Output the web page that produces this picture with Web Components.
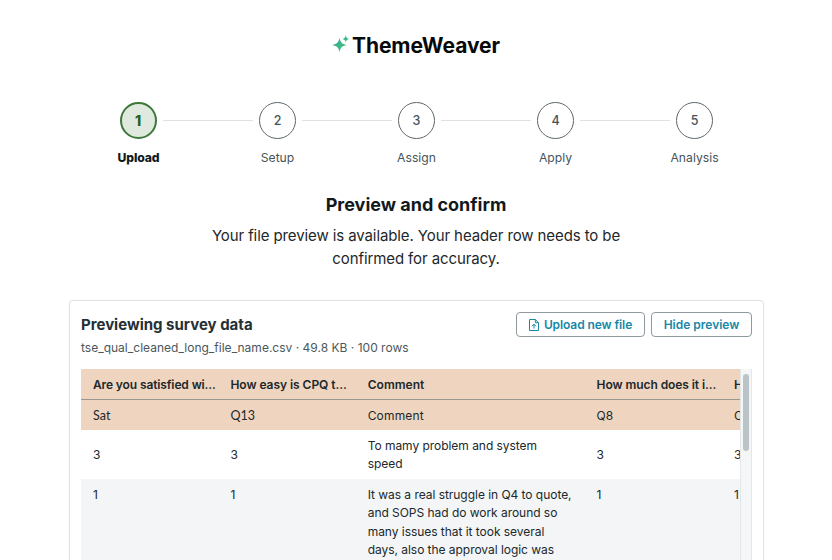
<!DOCTYPE html>
<html lang="en">
<head>
<meta charset="utf-8">
<title>ThemeWeaver</title>
<style>
html, body { margin: 0; background: #fff; }
body { height: 560px; overflow: hidden; font-family: Inter, "Liberation Sans", sans-serif; font-size: 12px; color: #20282b; }
</style>
</head>
<body>
<tw-app></tw-app>
<script>
function define(name, html, setup) {
  const template = document.createElement('template');
  template.innerHTML = html;
  customElements.define(name, class extends HTMLElement {
    connectedCallback() {
      if (this.shadowRoot) return;
      const root = this.attachShadow({ mode: 'open' });
      root.append(template.content.cloneNode(true));
      if (setup) setup(this, root);
    }
  });
}

define('tw-logo', `
<style>
:host { display: flex; justify-content: center; gap: 2px; height: 30px; align-items: center; }
svg { width: 18px; height: 19px; margin-top: -3px; }
span { font-size: 21px; font-weight: 650; letter-spacing: -.06px; color: #07090a; line-height: 30px; }
</style>
<svg viewBox="0 0 17 18">
  <defs><linearGradient id="g" x1="0" y1="0" x2="1" y2="1"><stop offset="0" stop-color="#2f8fa5"/><stop offset=".45" stop-color="#3cb58c"/><stop offset="1" stop-color="#48c973"/></linearGradient></defs>
  <path fill="url(#g)" d="M7.1 2.6C8 7.2 9.3 8.2 13.8 9.4 9.3 10.6 8 11.8 7.1 16.4 6.2 11.8 4.9 10.6 .4 9.4 4.9 8.2 6.2 7.2 7.1 2.6Z"/>
  <path fill="url(#g)" d="M13 .2C13.5 2.5 14.1 3.1 16.3 3.7 13.9 4.3 13.5 4.9 13 7 12.5 4.9 12.1 4.3 9.8 3.7 12.1 3.1 12.5 2.5 13 .2Z"/>
</svg>
<span>ThemeWeaver</span>`);

define('tw-step', `
<style>
:host { display: flex; flex-direction: column; align-items: center; width: 37px; color: #47545a; }
.dot { box-sizing: border-box; width: 37px; height: 37px; border: 1px solid #5d686c; border-radius: 50%; display: flex; align-items: center; justify-content: center; font-weight: 500; font-size: 12.5px; }
.label { margin-top: 10px; line-height: 18px; white-space: nowrap; font-size: 12.2px; }
:host([current]) { color: #12191c; }
:host([current]) .dot { border: 2px solid #3d7839; background: #dfe9de; color: #245f22; font-weight: 800; font-size: 14px; padding-right: 1px; }
:host([current]) .label { font-weight: 800; letter-spacing: -.1px; }
</style>
<div class="dot"></div><div class="label"><slot></slot></div>`,
(host, root) => { root.querySelector('.dot').textContent = host.getAttribute('number'); });

define('tw-stepper', `
<style>
:host { display: flex; width: 593px; margin: 0 auto; padding-left: 1px; }
i { flex: 1; height: 1px; margin: 18px 6px 0; background: #dfe1e2; }
</style>
<tw-step number="1" current>Upload</tw-step><i></i>
<tw-step number="2">Setup</tw-step><i></i>
<tw-step number="3">Assign</tw-step><i></i>
<tw-step number="4">Apply</tw-step><i></i>
<tw-step number="5">Analysis</tw-step>`);

define('tw-intro', `
<style>
:host { display: block; text-align: center; }
h1 { margin: 0; font-size: 18px; line-height: 26px; font-weight: 750; color: #12191c; letter-spacing: -.01px; }
p { margin: 7px auto 0; width: 430px; font-size: 15px; line-height: 22.5px; letter-spacing: -.1px; color: #1d272b; }
</style>
<h1>Preview and confirm</h1>
<p>Your file preview is available. Your header row needs to be confirmed for accuracy.</p>`);

define('tw-button', `
<style>
:host { box-sizing: border-box; display: flex; align-items: center; justify-content: center; height: 25px; border: 1px solid #909a9e; border-radius: 4px; color: #1687a7; font-weight: 600; white-space: nowrap; letter-spacing: var(--track, 0); }
</style>
<slot name="icon"></slot><slot></slot>`);

define('tw-upload-icon', `
<style>:host { display: block; width: 10px; height: 12px; margin-right: 5px; } svg { display: block; }</style>
<svg width="10" height="12" viewBox="0 0 10 12" fill="none" stroke="currentColor" stroke-width="1" stroke-linejoin="round">
  <path d="M.5 .5H6.3L9.5 3.7V11.5H.5ZM6.3 .5V3.7H9.5"/><path d="M5 9.5V5.4M3 7.2 5 5.2 7 7.2"/>
</svg>`);

define('tw-cell', `
<style>
:host { box-sizing: border-box; display: flex; align-items: center; padding: 1px 8px 0 12px; min-width: 0; letter-spacing: var(--track, 0); }
div { white-space: var(--wrap, nowrap); }
</style>
<div><slot></slot></div>`);

define('tw-row', `
<style>
:host { box-sizing: border-box; display: grid; grid-template-columns: 137.4px 137.3px 228.9px 137.3px 137.3px; line-height: 18.3px; letter-spacing: -.05px; }
:host([kind="head"]) { height: 31px; padding-top: 1px; font-weight: 600; background: #efd5bf; border-bottom: 1px solid #989890; --track: -.1px; }
:host([kind="sub"]) { height: 30px; padding-top: 1px; background: #efd5bf; }
:host([kind="body"]) { padding: 6px 0 5.4px; --wrap: normal; --track: -.04px; }
:host([striped]) { background: #f3f5f7; }
:host([striped]) ::slotted(*) { align-items: flex-start; }
</style>
<slot></slot>`);

define('tw-table', `
<style>
:host { display: grid; grid-template-columns: 659px 12px; height: 230px; }
.rows { overflow: hidden; }
.track { box-sizing: border-box; background: #f4f6f7; border: solid #e4e7e8; border-width: 0 1px; padding: 5px 2px 0; }
.thumb { height: 77px; border-radius: 3px; background: #bac3c6; }
.lato { font-family: Lato, sans-serif; font-size: 12.5px; --track: .1px; }
.answer { padding-right: 10px; }
</style>
<div class="rows">
  <tw-row kind="head"><tw-cell style="--track:-.12px">Are you satisfied wi...</tw-cell><tw-cell style="--track:-.04px">How easy is CPQ t...</tw-cell><tw-cell style="--track:.03px">Comment</tw-cell><tw-cell style="--track:-.07px">How much does it i...</tw-cell><tw-cell>H</tw-cell></tw-row>
  <tw-row kind="sub"><tw-cell class="lato">Sat</tw-cell><tw-cell class="lato">Q13</tw-cell><tw-cell style="--track:.17px">Comment</tw-cell><tw-cell>Q8</tw-cell><tw-cell>C</tw-cell></tw-row>
  <tw-row kind="body"><tw-cell>3</tw-cell><tw-cell>3</tw-cell><tw-cell class="answer">To mamy problem and system speed</tw-cell><tw-cell>3</tw-cell><tw-cell>3</tw-cell></tw-row>
  <tw-row kind="body" striped><tw-cell>1</tw-cell><tw-cell>1</tw-cell><tw-cell class="answer">It was a real struggle in Q4 to quote, and SOPS had do work around so many issues that it took several days, also the approval logic was</tw-cell><tw-cell>1</tw-cell><tw-cell>1</tw-cell></tw-row>
</div>
<div class="track"><div class="thumb"></div></div>`);

define('tw-card', `
<style>
:host { box-sizing: border-box; display: block; width: 695px; height: 300px; margin: 0 0 0 69px; padding: 11px 11px 0; border: 1px solid #e0e3e4; border-radius: 4px; box-shadow: 0 0 1px #e3e5e6; }
header { display: flex; gap: 6px; height: 25px; }
h2 { flex: 1; margin: 0; font-size: 15px; line-height: 25px; font-weight: 700; color: #253035; }
p { margin: 2px 0 12px; line-height: 18px; color: #4b575c; letter-spacing: .01px; }
.upload { width: 129px; } .hide { width: 101px; }
</style>
<header>
  <h2>Previewing survey data</h2>
  <tw-button class="upload" style="--track:-.1px"><tw-upload-icon slot="icon"></tw-upload-icon>Upload new file</tw-button>
  <tw-button class="hide">Hide preview</tw-button>
</header>
<p>tse_qual_cleaned_long_file_name.csv · 49.8 KB · 100 rows</p>
<tw-table></tw-table>`);

define('tw-app', `
<style>
:host { box-sizing: border-box; display: flex; flex-direction: column; height: 560px; padding-top: 31px; overflow: hidden; }
tw-stepper { margin-top: 41px; }
tw-intro { margin: 25px 0 30px; }
tw-card { flex: none; }
</style>
<tw-logo></tw-logo><tw-stepper></tw-stepper><tw-intro></tw-intro><tw-card></tw-card>`);
</script>
</body>
</html>
